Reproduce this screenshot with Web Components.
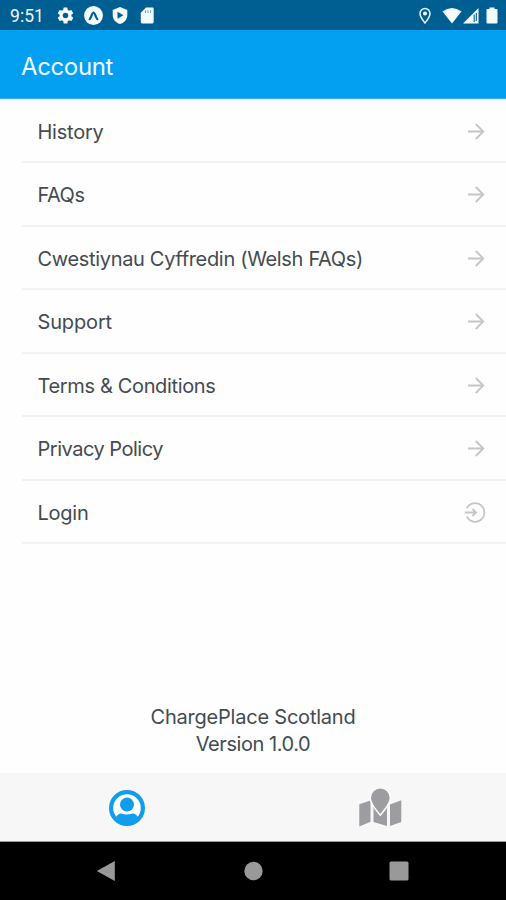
<!DOCTYPE html>
<html lang="en">
<head>
<meta charset="utf-8">
<title>Account</title>
<style>
html,body{margin:0;height:100%}
body{font-family:Inter,"Liberation Sans",sans-serif;color:#434b50;background:#fefefe;overflow:hidden}
</style>
</head>
<body>
<account-screen></account-screen>
<script>
const define = (name, html, ready) => customElements.define(name, class extends HTMLElement {
  constructor() {
    super();
    this.attachShadow({ mode: 'open' }).innerHTML = html;
  }
  connectedCallback() { if (ready) ready.call(this, this.shadowRoot); }
});

// A single line of text whose tracking is set so that it takes the given width.
define('tracked-text', `<style>
:host{display:inline-block;white-space:nowrap}
span{display:inline-block}
</style><span><slot></slot></span>`, function (root) {
  const span = root.querySelector('span');
  const count = this.textContent.length;
  const extra = (Number(this.getAttribute('width')) - span.getBoundingClientRect().width) / count;
  span.style.letterSpacing = extra.toFixed(3) + 'px';
});

define('status-bar', `<style>
:host{display:flex;align-items:center;height:30px;padding:1px 7px 0 10px;box-sizing:border-box;background:#005f92;color:#eef8fd;font:400 17.5px/30px Roboto,sans-serif}
svg{display:block;fill:#f4fbff;flex:none}
.left{display:flex;align-items:center;gap:8.5px;margin-left:12px}
.right{display:flex;align-items:center;margin-left:auto}
</style>
<tracked-text width="34">9:51</tracked-text>
<div class="left">
<svg width="19" height="19" viewBox="0 0 24 24"><path d="M19.4 13a7.800 7.800 0 0 0 0-2l2.100-1.650a.5.5 0 0 0 .12-.64l-2-3.460a.5.5 0 0 0-.6-.22l-2.500 1a7.300 7.300 0 0 0-1.700-.98l-.38-2.650A.5.5 0 0 0 14 2h-4a.5.5 0 0 0-.5.42l-.38 2.650c-.6.25-1.170.58-1.700.98l-2.480-1a.5.5 0 0 0-.6.22l-2 3.460a.5.5 0 0 0 .12.64L4.600 11a7.800 7.800 0 0 0 0 2l-2.100 1.650a.5.5 0 0 0-.12.64l2 3.460c.12.22.38.3.6.22l2.500-1c.52.4 1.080.73 1.700.98l.38 2.650c.03.24.24.4.48.4h4c.25 0 .46-.16.5-.4l.38-2.650a7.300 7.300 0 0 0 1.700-.98l2.480 1c.22.08.48 0 .6-.22l2-3.460a.5.5 0 0 0-.12-.64zM12 15.500a3.500 3.500 0 1 1 0-7 3.500 3.500 0 0 1 0 7z"/></svg>
<svg width="19" height="19" viewBox="0 0 19 19"><circle cx="9.500" cy="9.500" r="9.400"/><path d="M5.700 13.200C7.500 11.500 8 6.500 9.500 6.500s2 5 3.800 6.700" fill="none" stroke="#005f92" stroke-width="2.200" stroke-linecap="round"/></svg>
<svg width="18" height="19" viewBox="0 0 18 19"><path d="M9 1l7.300 3v5c0 4.500-3 7.700-7.300 9-4.300-1.300-7.300-4.500-7.300-9V4z"/><path d="M6.500 5.700v7l6-3.500z" fill="#005f92"/></svg>
<svg width="18" height="19" viewBox="0 0 18 19"><path d="M8 1.500h6.300q1.400 0 1.400 1.400v13.200q0 1.400-1.400 1.400H4.200q-1.400 0-1.400-1.400V6.700z"/><path d="M7.400 4.300v2.600M10 4.300v2.600M12.600 4.300v2.600" stroke="#5f9fbe" stroke-width="1"/></svg>
</div>
<div class="right">
<svg width="14" height="18" viewBox="0 0 14 18"><path d="M7 1.500a5 5 0 0 1 5 5c0 3.400-5 9.500-5 9.500S2 9.900 2 6.500a5 5 0 0 1 5-5z" fill="none" stroke="#e8f5fb" stroke-width="1.500"/><circle cx="7" cy="6.500" r="2"/></svg>
<svg style="margin-left:10px" width="20" height="18" viewBox="0 0 20 18"><path d="M10 16.500L.5 4.500Q10-2.500 19.500 4.500z"/></svg>
<svg width="18" height="18" viewBox="0 0 18 18"><path d="M1 16.500L16.500 1V16.500z"/><path d="M12.200 7.500v7.500M14.300 6v8" stroke="#005f92" stroke-width="1.100"/></svg>
<svg style="margin-left:5px" width="14" height="18" viewBox="0 0 14 18"><path d="M4.500 .5h5v1.500h2q1 0 1 1v12.500q0 1-1 1h-9q-1 0-1-1V3q0-1 1-1h2z"/></svg>
</div>`);

define('title-bar', `<style>
:host{display:flex;align-items:center;height:69px;box-sizing:border-box;padding:4px 21px 0;background:#039ff0;color:#effaff;font-size:24px;border-bottom:1px solid #35aeea}
</style><slot></slot>`);

define('menu-row', `<style>
:host{display:block;height:63.5px;padding-left:22px;box-sizing:border-box}
div{display:flex;justify-content:space-between;align-items:center;height:100%;box-sizing:border-box;padding:3px 20px 0 15.5px;border-bottom:2px solid #f2f2f2;font-size:20px;line-height:26px}
svg{display:block;fill:none;stroke:#c5c5c5;stroke-width:1.800}
</style><div><slot></slot><svg width="22" height="24" viewBox="0 0 22 24"></svg></div>`, function (root) {
  const login = this.getAttribute('icon') === 'login';
  root.querySelector('svg').innerHTML = login
    ? '<path d="M2.800 7.300A9.300 9.300 0 1 1 2.800 15.700M.8 11.500H12M8.500 8l3.500 3.500-3.500 3.500"/>'
    : '<path d="M4 11.500H19.300M11.800 4l7.500 7.500-7.500 7.500"/>';
});

define('app-version', `<style>
:host{display:flex;flex-direction:column;align-items:center;font-size:20px;line-height:26.500px;margin-top:auto;padding-bottom:16px}
</style><tracked-text width="205">ChargePlace Scotland</tracked-text><tracked-text width="114.500">Version 1.0.0</tracked-text>`);

define('tab-bar', `<style>
:host{display:grid;grid-template-columns:1fr 1fr;height:69px;background:#f7f7f7;justify-items:center;align-items:center;border-bottom:1px solid #999;box-sizing:border-box;padding-top:2px}
svg{display:block}
</style>
<svg width="38" height="38" viewBox="0 0 38 38"><circle cx="19" cy="19" r="15.900" fill="#fff" stroke="#119cec" stroke-width="4.200"/><circle cx="19" cy="15.600" r="7" fill="#119cec"/><path d="M7.500 29.500C8.500 26 11 24.600 13.500 24.600Q19 26.400 24.500 24.600C27 24.600 29.500 26 30.500 29.500Q26 35.500 19 35.500T7.500 29.500z" fill="#119cec"/></svg>
<svg width="44" height="40" viewBox="0 0 44 40" fill="#9d9da1"><path d="M1.300 16.300L12.500 12.500v21.200L1.300 38.500zM15.500 17l6.500 9 7-9V38L15.500 34zM32 16.500L43.300 12.300v21.700L32 38z"/><path d="M22.300 .5a9.300 9.300 0 0 1 9.300 9.300C31.600 15.500 22.300 26 22.300 26S13 15.500 13 9.800A9.300 9.300 0 0 1 22.300 .5z" stroke="#fbfbfb" stroke-width="3" paint-order="stroke"/></svg>`);

define('system-nav', `<style>
:host{display:flex;align-items:center;justify-content:space-between;height:58px;box-sizing:border-box;padding:0 97px 0 96px;background:#000}
svg{display:block;fill:#999}
</style>
<svg width="20" height="22" viewBox="0 0 20 22"><path d="M.8 11L18.800 1v20z"/></svg>
<svg width="20" height="20" viewBox="0 0 20 20"><circle cx="10.500" cy="10" r="9.200"/></svg>
<svg width="20" height="20" viewBox="0 0 20 20"><rect x=".5" y=".5" width="19" height="19" rx="1.500"/></svg>`);

define('account-screen', `<style>
:host{display:flex;flex-direction:column;height:900px;width:506px}
title-bar{flex:none}
nav{padding-top:.5px}
</style>
<status-bar></status-bar>
<title-bar><tracked-text width="92">Account</tracked-text></title-bar>
<nav>
<menu-row><tracked-text width="66">History</tracked-text></menu-row>
<menu-row><tracked-text width="47">FAQs</tracked-text></menu-row>
<menu-row><tracked-text width="325.500">Cwestiynau Cyffredin (Welsh FAQs)</tracked-text></menu-row>
<menu-row><tracked-text width="74.500">Support</tracked-text></menu-row>
<menu-row><tracked-text width="178">Terms &amp; Conditions</tracked-text></menu-row>
<menu-row><tracked-text width="125.500">Privacy Policy</tracked-text></menu-row>
<menu-row icon="login"><tracked-text width="51">Login</tracked-text></menu-row>
</nav>
<app-version></app-version>
<tab-bar></tab-bar>
<system-nav></system-nav>`);
</script>
</body>
</html>
